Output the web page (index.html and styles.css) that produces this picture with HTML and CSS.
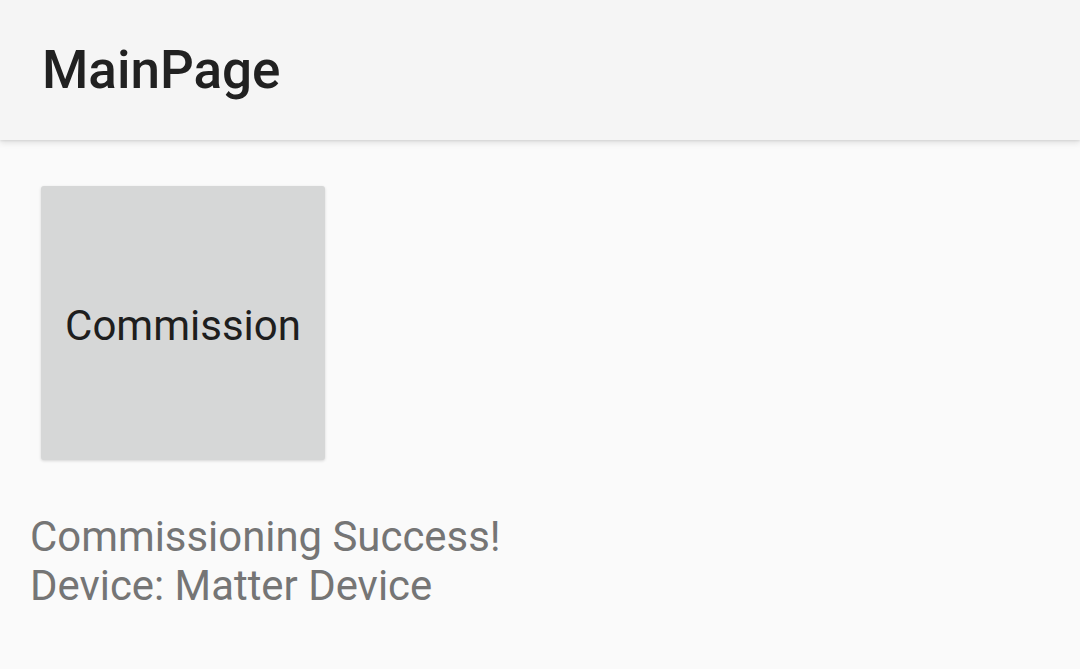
FILE: index.html
```html
<!DOCTYPE html>
<html>
<head>
<meta charset="utf-8">
<link rel="stylesheet" href="styles.css">
</head>
<body>
<header class="appbar">
  <h1 class="title">MainPage</h1>
</header>
<main class="content">
  <button class="commission">Commission</button>
  <p class="status">Commissioning Success!<br>Device: Matter Device</p>
</main>
</body>
</html>
```
FILE: styles.css
```css
html, body {
  margin: 0;
  padding: 0;
  width: 1080px;
  height: 669px;
  overflow: hidden;
  background: #fafafa;
  font-family: Roboto, "Noto Sans", sans-serif;
}
.appbar {
  position: relative;
  z-index: 1;
  height: 140px;
  background: #f5f5f5;
  box-shadow: 0 3px 6px rgba(0,0,0,0.10), 0 1px 2px rgba(0,0,0,0.08);
  display: flex;
  align-items: center;
  padding-left: 42px;
  box-sizing: border-box;
}
.title {
  margin: 0;
  font-size: 53px;
  font-weight: 500;
  color: #212121;
  letter-spacing: 0;
  line-height: 1;
}
.content {
  padding: 46px 0 0 30px;
}
.commission {
  display: flex;
  align-items: center;
  justify-content: center;
  margin-left: 11px;
  width: 284px;
  height: 274px;
  border: none;
  border-radius: 3px;
  background: #d6d7d7;
  box-shadow: 0 1px 3px rgba(0,0,0,0.15);
  font-family: Roboto, "Noto Sans", sans-serif;
  font-size: 42px;
  color: #1e1e1e;
  padding: 4px 0 0 0;
}
.status {
  margin: 52px 0 0 0;
  font-size: 41.9px;
  line-height: 49px;
  color: #757575;
}
```
